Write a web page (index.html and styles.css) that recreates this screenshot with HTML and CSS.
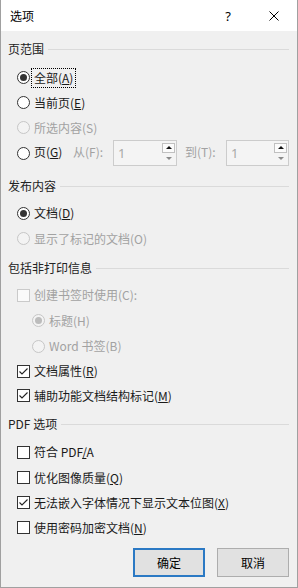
FILE: index.html
```html
<!DOCTYPE html>
<html>
<head>
<meta charset="utf-8">
<link rel="stylesheet" href="styles.css">
</head>
<body>
<div class="dialog">
  <div class="titlebar">
    <span class="title">选项</span>
    <span class="tbtn help">?</span>
    <span class="tbtn close"><svg width="10" height="10" viewBox="0 0 10 10"><path d="M0.5 0.5L9.5 9.5M9.5 0.5L0.5 9.5" stroke="#000" stroke-width="1" fill="none"/></svg></span>
  </div>
  <div class="content">
    <div class="header mt8">页范围</div>
    <div class="row mt6"><span class="radio on"></span><span class="focus">全部(<u>A</u>)</span></div>
    <div class="row"><span class="radio"></span><span>当前页(<u>E</u>)</span></div>
    <div class="row dis"><span class="radio"></span><span>所选内容(S)</span></div>
    <div class="row h26 pages">
      <span class="radio"></span><span class="lbl-page">页(<u>G</u>)</span>
      <span class="lbl-from">从(F):</span>
      <span class="spin"><span class="val">1</span><span class="arrows"><span class="up"></span><span class="down"></span></span></span>
      <span class="lbl-to">到(T):</span>
      <span class="spin spin2"><span class="val">1</span><span class="arrows"><span class="up"></span><span class="down"></span></span></span>
    </div>

    <div class="header mt10">发布内容</div>
    <div class="row mt4 h26"><span class="radio on"></span><span>文档(<u>D</u>)</span></div>
    <div class="row dis"><span class="radio"></span><span>显示了标记的文档(O)</span></div>

    <div class="header mt7">包括非打印信息</div>
    <div class="row mt4 h26 dis"><span class="check"></span><span>创建书签时使用(C):</span></div>
    <div class="row sub dis"><span class="radio on"></span><span>标题(H)</span></div>
    <div class="row sub h26 dis"><span class="radio"></span><span>Word 书签(B)</span></div>
    <div class="row h24"><span class="check"><svg width="11" height="11" viewBox="0 0 11 11"><path d="M1.5 5.5L4 8L9.5 2.5" stroke="#222" stroke-width="1.1" fill="none"/></svg></span><span>文档属性(<u>R</u>)</span></div>
    <div class="row"><span class="check"><svg width="11" height="11" viewBox="0 0 11 11"><path d="M1.5 5.5L4 8L9.5 2.5" stroke="#222" stroke-width="1.1" fill="none"/></svg></span><span>辅助功能文档结构标记(<u>M</u>)</span></div>

    <div class="header mt6">PDF 选项</div>
    <div class="row mt5 h26"><span class="check"></span><span>符合 PDF<u>/</u>A</span></div>
    <div class="row"><span class="check"></span><span>优化图像质量(<u>Q</u>)</span></div>
    <div class="row"><span class="check"><svg width="11" height="11" viewBox="0 0 11 11"><path d="M1.5 5.5L4 8L9.5 2.5" stroke="#222" stroke-width="1.1" fill="none"/></svg></span><span>无法嵌入字体情况下显示文本位图(<u>X</u>)</span></div>
    <div class="row"><span class="check"></span><span>使用密码加密文档(<u>N</u>)</span></div>

    <div class="buttons">
      <span class="btn primary">确定</span>
      <span class="btn">取消</span>
    </div>
  </div>
</div>
</body>
</html>
```
FILE: styles.css
```css
* { box-sizing: border-box; margin: 0; padding: 0; }
body {
  margin: 0;
  background: #f0f0f0;
  font-family: "Noto Sans CJK SC", "Noto Sans", sans-serif;
  font-size: 12px;
  color: #1a1a1a;
}
u { text-decoration: underline; text-underline-offset: 1px; }
.dialog {
  width: 298px;
  height: 588px;
  border: 1px solid #a0a0a0;
  border-top: none;
  background: #f0f0f0;
  display: flex;
  flex-direction: column;
}
.titlebar {
  height: 31px;
  background: #fff;
  display: flex;
  align-items: center;
  padding-left: 9px;
  line-height: 16px;
}
.title { flex: 1; font-size: 12px; color: #000; }
.tbtn {
  width: 46px;
  height: 31px;
  display: flex;
  align-items: center;
  justify-content: center;
  color: #000;
}
.help { font-size: 13px; font-family: "Noto Sans", sans-serif; }
.content {
  padding: 0 8px 0 7px;
  display: flex;
  flex-direction: column;
}
.header {
  height: 20px;
  display: flex;
  align-items: center;
  gap: 4px;
  color: #222;
  line-height: 16px;
}
.header::after {
  content: "";
  flex: 1;
  height: 1px;
  background: #dadada;
}
.mt4 { margin-top: 4px; }
.mt5 { margin-top: 5px; }
.mt6 { margin-top: 6px; }
.mt7 { margin-top: 7px; }
.mt8 { margin-top: 8px; }
.mt10 { margin-top: 10px; }
.row {
  height: 25px;
  display: flex;
  align-items: center;
  gap: 4px;
  padding-left: 9px;
  line-height: 16px;
  color: #1a1a1a;
}
.row.h24 { height: 24px; }
.row.h26 { height: 26px; }
.row.sub { padding-left: 24px; }
.row.dis { color: #a2a2a2; }
.focus { outline: 1px dotted #000; outline-offset: 1px; padding: 0 1px; margin-left: -1px; }
.radio {
  width: 13px;
  height: 13px;
  flex: none;
  border: 1px solid #333;
  border-radius: 50%;
  background: #fff;
  display: flex;
  align-items: center;
  justify-content: center;
}
.radio.on::after {
  content: "";
  width: 7px;
  height: 7px;
  border-radius: 50%;
  background: #333;
}
.dis .radio { border-color: #c6c6c6; background: #f3f3f3; }
.dis .radio.on::after { background: #bcbcbc; }
.check {
  width: 13px;
  height: 13px;
  flex: none;
  border: 1px solid #333;
  background: #fff;
  display: flex;
  align-items: center;
  justify-content: center;
}
.dis .check { border-color: #cacaca; background: #fafafa; }
.pages { gap: 0; }
.pages .radio { margin-right: 4px; }
.lbl-page { width: 39px; margin-bottom: 3px; }
.lbl-from { width: 40px; color: #a2a2a2; margin-bottom: 3px; }
.lbl-to { width: 41px; margin-left: 8px; color: #a2a2a2; margin-bottom: 3px; }
.spin {
  width: 64px;
  height: 26px;
  border: 1px solid #cccccc;
  background: #f4f4f4;
  display: flex;
  align-items: center;
}
.spin2 { width: 63px; }
.val {
  flex: 1;
  padding-left: 4px;
  font-family: "Noto Sans", sans-serif;
  font-size: 13px;
  color: #a8a8a8;
}
.arrows {
  width: 13px;
  margin-right: 1px;
  display: flex;
  flex-direction: column;
  gap: 1px;
}
.up, .down {
  height: 10px;
  display: flex;
  align-items: center;
  justify-content: center;
}
.up { border: 1px solid #c0c0c0; background: #fbfbfb; }
.up::after {
  content: "";
  border-left: 3px solid transparent;
  border-right: 3px solid transparent;
  border-bottom: 3px solid #111;
}
.down::after {
  content: "";
  border-left: 3px solid transparent;
  border-right: 3px solid transparent;
  border-top: 3px solid #8a8a8a;
}
.buttons {
  margin-top: 8px;
  display: flex;
  justify-content: flex-end;
  gap: 12px;
}
.btn {
  width: 72px;
  height: 29px;
  border: 1px solid #adadad;
  background: #e1e1e1;
  display: flex;
  align-items: center;
  justify-content: center;
  color: #000;
  line-height: 16px;
}
.btn.primary { border: 2px solid #2b79c4; }
```
